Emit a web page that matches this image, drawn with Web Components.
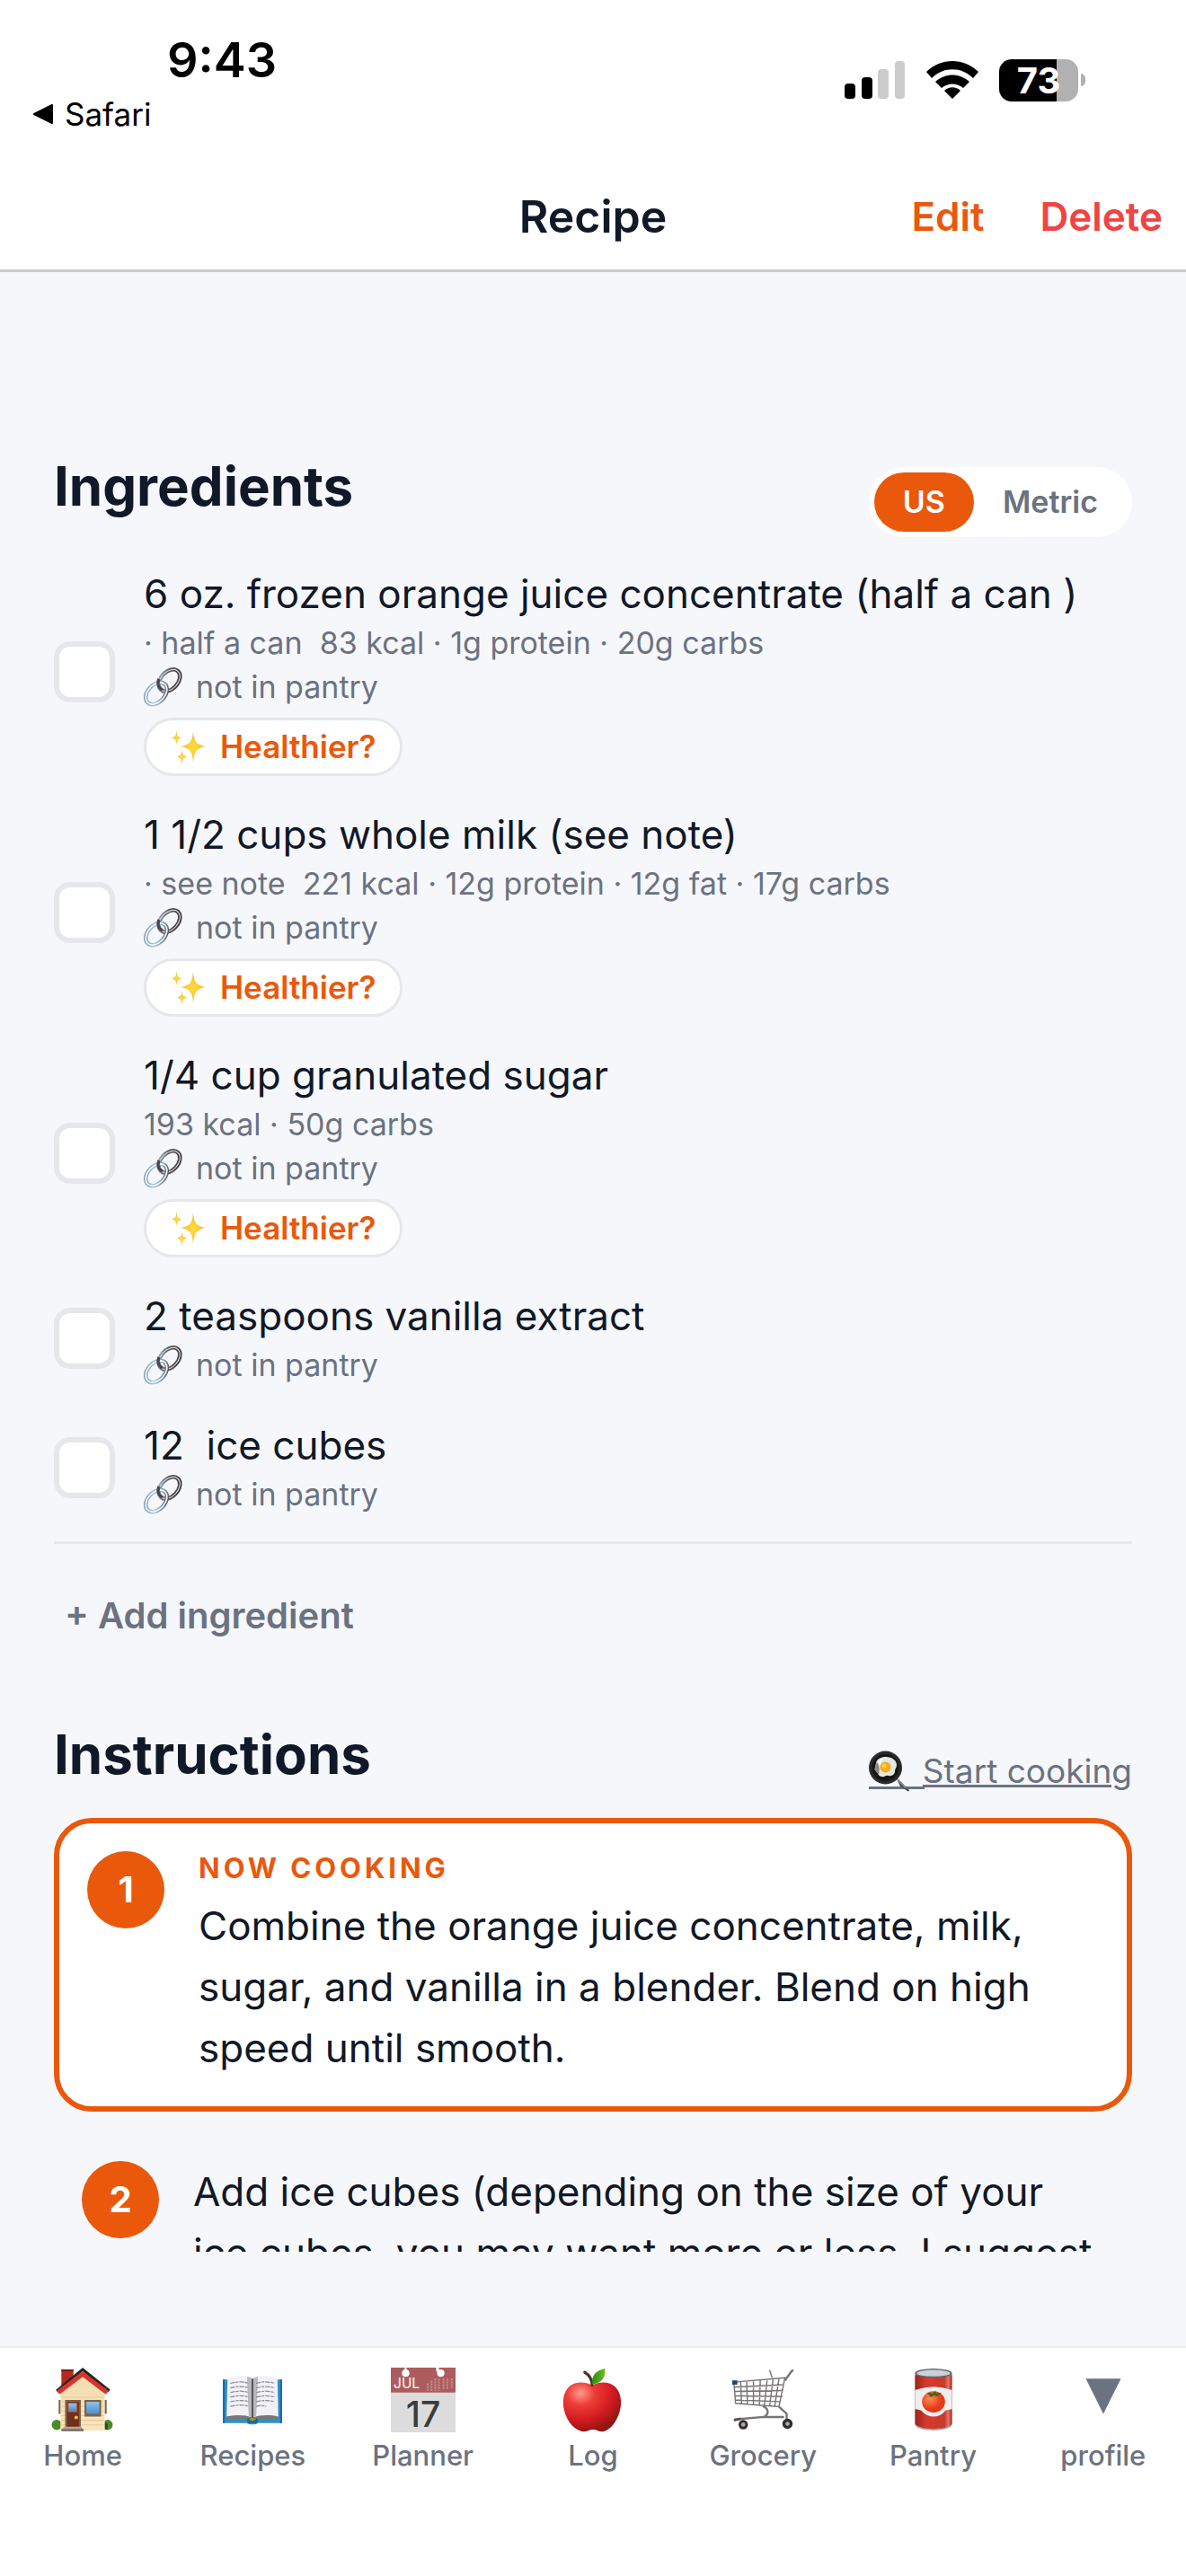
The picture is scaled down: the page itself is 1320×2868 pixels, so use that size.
<!DOCTYPE html>
<html lang="en">
<head>
<meta charset="utf-8">
<meta name="viewport" content="width=device-width, initial-scale=1">
<title>Recipe</title>
<style>
html, body {
  margin: 0;
  height: 100%;
}

body {
  --ink: #111827;
  --muted: #6b7280;
  --accent: #ea580c;
  --danger: #ef4444;
  --line: #e5e7eb;
  --page: #f6f7fb;
  font-family: Inter, "Liberation Sans", sans-serif;
  color: var(--ink);
  background: var(--page);
}
</style>
</head>
<body>

<recipe-app>
  <status-bar slot="top"></status-bar>
  <nav-header slot="top">Recipe</nav-header>

  <recipe-section>
    <span slot="title">Ingredients</span>
    <unit-toggle slot="action"></unit-toggle>
    <ingredient-row healthier>6 oz. frozen orange juice concentrate (half a can )<span slot="meta">· half a can&nbsp; 83 kcal · 1g protein · 20g carbs</span></ingredient-row>
    <ingredient-row healthier>1 1/2 cups whole milk (see note)<span slot="meta">· see note&nbsp; 221 kcal · 12g protein · 12g fat · 17g carbs</span></ingredient-row>
    <ingredient-row healthier>1/4 cup granulated sugar<span slot="meta">193 kcal · 50g carbs</span></ingredient-row>
    <ingredient-row>2 teaspoons vanilla extract</ingredient-row>
    <ingredient-row>12&nbsp; ice cubes</ingredient-row>
    <add-ingredient>+ Add ingredient</add-ingredient>
  </recipe-section>

  <recipe-section class="steps">
    <span slot="title">Instructions</span>
    <cooking-link slot="action">Start cooking</cooking-link>
    <step-card number="1" active>Combine the orange juice concentrate, milk, sugar, and vanilla in a blender. Blend on high speed until smooth.</step-card>
    <step-card number="2">Add ice cubes (depending on the size of your ice cubes, you may want more or less. I suggest</step-card>
  </recipe-section>

  <tab-bar slot="bottom">
    <tab-item icon="home">Home</tab-item>
    <tab-item icon="book">Recipes</tab-item>
    <tab-item icon="calendar">Planner</tab-item>
    <tab-item icon="apple">Log</tab-item>
    <tab-item icon="cart">Grocery</tab-item>
    <tab-item icon="can">Pantry</tab-item>
    <tab-item icon="down">profile</tab-item>
  </tab-bar>
</recipe-app>

<script>
const icons = {
  link: `<svg viewBox="0 0 42 42">
    <defs><linearGradient id="steel" x1="0" y1="0" x2="1" y2="1"><stop offset="0" stop-color="#a9c6e2"/><stop offset=".45" stop-color="#5d5558"/><stop offset="1" stop-color="#3b3436"/></linearGradient>
    <linearGradient id="steel2" x1="0" y1="0" x2="1" y2="1"><stop offset="0" stop-color="#7d95ad"/><stop offset=".5" stop-color="#a9c9e2"/><stop offset="1" stop-color="#4a4648"/></linearGradient></defs>
    <g fill="none"><ellipse cx="28.500" cy="13.500" rx="14" ry="9.500" transform="rotate(-47 28.500 13.500)" stroke="url(#steel)" stroke-width="4.500"/>
    <ellipse cx="28.500" cy="13.500" rx="14" ry="9.500" transform="rotate(-47 28.500 13.500)" stroke="#dbe7f2" stroke-width="1"/>
    <ellipse cx="14" cy="28" rx="14" ry="9.500" transform="rotate(-47 14 28)" stroke="url(#steel2)" stroke-width="4.500"/>
    <ellipse cx="14" cy="28" rx="14" ry="9.500" transform="rotate(-47 14 28)" stroke="#f4f9fd" stroke-width="1.600"/>
    <path d="M17 12c-2 5-1 10 4 12" stroke="#4c4547" stroke-width="3.500"/></g></svg>`,

  sparkles: `<svg viewBox="0 0 38 38">
    <defs><radialGradient id="gold"><stop offset="0" stop-color="#ffdf3a"/><stop offset=".5" stop-color="#fdc935"/><stop offset="1" stop-color="#f6b04a"/></radialGradient></defs>
    <g fill="url(#gold)"><path d="M24 1c1 11 3 15 14 17-11 2-13 6-14 18-1-12-3-16-14-18 11-2 13-6 14-17z"/>
    <path d="M5.500 0c.6 6 1.500 7.500 5.500 8.500-4 1-5 2.500-5.500 8-.6-5.500-1.500-7-5.500-8 4-1 5-2.500 5.500-8.500z"/>
    <path d="M11.500 22c.6 5 1.500 6.500 5.500 7.500-4 1-5 3-5.500 8.500-.6-5.500-1.500-7.500-5.500-8.500 4-1 5-2.500 5.500-7.500z"/></g></svg>`,

  pan: `<svg viewBox="0 0 46 46">
    <path d="M31 31l4 3 10 10c0 1-1 2-2 1L35 40z" fill="#4b4b4d"/><path d="M32 32l9 10" stroke="#8a8a8c" stroke-width="1.500"/>
    <circle cx="18.500" cy="19" r="18.500" fill="#2a2a2a"/><circle cx="18.500" cy="19" r="15" fill="#161616"/>
    <path d="M8 14c1-5 6-7 11-7 7 0 12 4 12 9 0 3-2 4-2 7s-3 6-7 5-4 2-8 1-3-4-6-6c-1-2-1-6 0-9z" fill="#e5e8df"/>
    <path d="M9 13c3 3 3 9 2 14l-5-6z" fill="#8f858c"/>
    <path d="M15 9c-3 2-3 5-2 7" stroke="#fff" stroke-width="2" fill="none"/>
    <circle cx="18.500" cy="18.500" r="6" fill="#f9a91b"/><circle cx="17" cy="17" r="2.500" fill="#ffd054"/></svg>`,

  home: `<svg viewBox="0 0 70 70">
    <defs><linearGradient id="wall" x1="0" y1="0" x2="0" y2="1"><stop offset="0" stop-color="#f3dcae"/><stop offset="1" stop-color="#f8e6bf"/></linearGradient>
    <linearGradient id="glass" x1="0" y1="0" x2="0" y2="1"><stop offset="0" stop-color="#8cc4f0"/><stop offset="1" stop-color="#4d8ed0"/></linearGradient></defs>
    <path d="M12 2h13v14L12 28z" fill="#b3281f"/><path d="M12 2h13v2H12z" fill="#7b1e1b"/>
    <circle cx="7" cy="62" r="5.500" fill="#4c8a27"/><circle cx="62" cy="62" r="5.500" fill="#4c8a27"/><path d="M57 60h5v7h-5z" fill="#274d1d"/>
    <path d="M11 27L35 7l24 20v41H11z" fill="url(#wall)"/>
    <path d="M12 32h46M12 37h46M12 42h46M12 47h46M12 52h46M12 57h46M12 62h46" stroke="#e6cb99" stroke-width="1"/>
    <path d="M9 35h2v15H9zM59 35h2v15h-2z" fill="#7b6954"/>
    <path d="M6 24L35 0l30 24-3 3L35 4 8 27z" fill="#252525"/>
    <path d="M7 25L35 4l28 21-3 4L35 10 10 29z" fill="#d9342b"/>
    <path d="M16 35h17v29H16z" fill="#806043"/><path d="M18 37h13v27H18z" fill="#71301c"/><path d="M19 38h10v10H19z" fill="#bd6d4f"/><path d="M20 39h8v8h-8z" fill="url(#glass)"/><circle cx="28" cy="54" r="2" fill="#f2bd4a"/>
    <path d="M37 35h18v18H37z" fill="#806043"/><path d="M39 37h14v13H39z" fill="url(#glass)"/>
    <path d="M14 64h20v2H14z" fill="#b5aa9d"/><path d="M12 66h24v3H12z" fill="#81786f"/></svg>`,

  book: `<svg viewBox="0 0 70 70">
    <path d="M3 13h64v47H41c-2 2-10 2-12 0H3z" fill="#2f8fc8"/><path d="M3 13h2v47H3zM65 13h2v47h-2z" fill="#1c6ba3"/>
    <path d="M9 50l-2 6h25l3 2 3-2h25l-2-6z" fill="#777"/>
    <path d="M8 12c8-3 19-5 26-1v43c-7-3-18-3-27-1z" fill="#f1f1f6"/><path d="M62 12c-8-3-19-5-26-1v43c7-3 18-3 27-1z" fill="#f1f1f6"/>
    <path d="M29 10c3 0 5 1 6 3 1-2 3-3 6-3l-2 44h-8z" fill="#b9b9c0"/><path d="M34 12h2v43h-2z" fill="#555"/>
    <path d="M11 17c8-2 14-2 20 0M11 22c8-2 14-2 20 0M11 27c8-2 14-2 20 0M11 32c8-2 14-2 20 0M11 37c8-2 14-2 20 0M11 42c8-2 14-2 20 0M39 17c7-2 13-2 20 0M39 22c7-2 13-2 20 0M39 27c7-2 13-2 20 0M39 32c7-2 13-2 20 0M39 37c7-2 13-2 20 0M39 42c4-1 8-1 11 0" stroke="#8b8b93" stroke-width="1.200" stroke-dasharray="5 1 3 1" fill="none"/>
    <path d="M29 56c3-3 9-3 12 0l-1 4H30z" fill="#186a92"/><path d="M31 56c2-2 6-2 8 0l-4 2z" fill="#b78e20"/></svg>`,

  calendar: `<svg viewBox="0 0 70 70">
    <path d="M0 0h70v70H0z" fill="#dcdcdc"/><path d="M0 0h70v27H0z" fill="#ac5c5d"/>
    <path d="M15 0h2v4h-2zM49 0h3v4h-3z" fill="#fff"/><circle cx="16" cy="6" r="4" fill="#fff"/><circle cx="54" cy="6" r="4" fill="#fff"/>
    <path d="M40 17v8M44 14v11M48 12v13M52 12v13M57 12v11M61 12v11M66 12v10" stroke="#c98f90" stroke-width="2" stroke-dasharray="2 1"/>
    <text x="3" y="22" font-family="Inter, sans-serif" font-size="15" fill="#f5e4e4">JUL</text>
    <text x="35" y="64" text-anchor="middle" font-family="Inter, sans-serif" font-size="38" font-weight="500" fill="#3c3c3c">17</text></svg>`,

  apple: `<svg viewBox="0 0 70 70">
    <defs><radialGradient id="skin" cx=".3" cy=".22" r=".8"><stop offset="0" stop-color="#ff9b8c"/><stop offset=".3" stop-color="#ee3d38"/><stop offset=".7" stop-color="#d11a20"/><stop offset="1" stop-color="#8e1712"/></radialGradient>
    <linearGradient id="leaf"><stop offset="0" stop-color="#2d8a15"/><stop offset="1" stop-color="#6cbf1e"/></linearGradient></defs>
    <path d="M34 19c8-4 18-4 24 1 6 5 8 13 7 22-2 13-9 24-18 27-5 1-7-2-12-2s-7 3-12 2C12 66 5 55 3 42c-1-9 1-17 7-22 6-5 16-5 24-1z" fill="url(#skin)"/>
    <path d="M26 5c5 3 8 8 8 14" stroke="#54301d" stroke-width="3" stroke-linecap="round" fill="none"/>
    <path d="M34 18c-1-9 4-15 14-17 1 9-3 16-14 17z" fill="url(#leaf)"/></svg>`,

  cart: `<svg viewBox="0 0 76 70">
    <g fill="none" stroke="#777376" stroke-width="1.500"><path d="M4 14l60-5-7 34-51-4zM4 20l59-3M5 25l57-1M5 30l56 1M6 35l52 2M12 14l1 25M19 13l1 27M27 13v27M35 12l-1 29M43 12l-3 29M50 11l-4 31M57 10l-5 32"/>
    <path d="M64 12L72 1l2-1M57 43l9 8v9M38 42c8 4 7 10 1 13L5 58M39 55h24" stroke-width="2.500"/><path d="M46 0l3 9"/></g>
    <path d="M2 12h6v5H2z" fill="#224765"/><path d="M4 59l8-2" stroke="#555" stroke-width="3"/>
    <circle cx="15" cy="64" r="5.500" fill="#302b2c"/><circle cx="15" cy="64" r="2.500" fill="#aaa"/>
    <circle cx="67" cy="63" r="6" fill="#302b2c"/><circle cx="67" cy="63" r="2.500" fill="#aaa"/></svg>`,

  can: `<svg viewBox="0 0 70 70">
    <defs><linearGradient id="tin"><stop offset="0" stop-color="#98251c"/><stop offset=".3" stop-color="#d5392d"/><stop offset=".8" stop-color="#c93b2d"/><stop offset=".9" stop-color="#df7769"/><stop offset="1" stop-color="#a42a20"/></linearGradient>
    <radialGradient id="tomato" cx=".35" cy=".35"><stop offset="0" stop-color="#ff8b54"/><stop offset="1" stop-color="#e6391a"/></radialGradient></defs>
    <path d="M15 6h40v56c-3 8-37 8-40 0z" fill="#a7a9ab"/><path d="M15 8h40v53c-5 7-35 7-40 0z" fill="url(#tin)"/>
    <path d="M15 24c5 0 8-3 20-3s15 3 20 3v21c-6 0-9 4-20 4s-14-4-20-4z" fill="#edf0ed"/><circle cx="35" cy="37" r="16" fill="#edf0ed"/>
    <ellipse cx="35" cy="6" rx="20" ry="5" fill="#66696d"/><ellipse cx="35" cy="6" rx="18" ry="3.500" fill="#c9d2db"/>
    <ellipse cx="35" cy="37" rx="12.500" ry="11.500" fill="url(#tomato)"/><path d="M28 27l6 1 3-3 1 3 6-1-5 4-3-1-4 2z" fill="#386a22"/></svg>`,

  down: `<svg viewBox="0 0 70 70"><path d="M16 12h38L35 50z" fill="#6b7280"/></svg>`
};

class BaseElement extends HTMLElement {
  connectedCallback() {
    if (this.shadowRoot) return;
    const template = document.createElement("template");
    template.innerHTML = `<style>
      * { box-sizing: border-box; }
      svg { display: block; width: 100%; height: 100%; overflow: visible; }
      button { font: inherit; color: inherit; background: none; border: 0; padding: 0; margin: 0; }
      a { color: inherit; text-decoration: none; }
    </style>` + this.render();
    this.attachShadow({ mode: "open" }).appendChild(template.content.cloneNode(true));
  }
}

class RecipeApp extends BaseElement {
  render() {
    return `
<style>
:host {
  display: flex;
  flex-direction: column;
  height: 100vh;
}
header {
  background: white;
  border-bottom: 3px solid #c9cbd0;
}
main {
  flex: 1;
  min-height: 0;
  overflow: hidden;
  padding: 207px 60px 0;
  margin-bottom: 105px;
}
</style>
<header><slot name="top"></slot></header>
<main><slot></slot></main>
<slot name="bottom"></slot>`;
  }
}

class StatusBar extends BaseElement {
  render() {
    return `
<style>
:host {
  display: flex;
  justify-content: space-between;
  align-items: flex-start;
  padding: 34px 112px 0 36px;
  color: black;
}
.time {
  font-size: 54px;
  line-height: 66px;
  font-weight: 600;
  padding-left: 150px;
}
.back {
  display: flex;
  align-items: center;
  gap: 12px;
  font-size: 35px;
  line-height: 54px;
}
.back svg { width: 24px; height: 22px; }
.icons {
  display: flex;
  align-items: center;
  gap: 22px;
  height: 48px;
  margin-top: 31px;
}
.signal { width: 68px; height: 44px; }
.wifi { width: 60px; height: 44px; }
.battery {
  display: flex;
  align-items: center;
  gap: 3px;
}
.level {
  width: 88px;
  border-radius: 14px;
  background: linear-gradient(to right, black 73%, #b1b1b1 73%);
  color: white;
  text-align: center;
  font-size: 40px;
  line-height: 47px;
  font-weight: 700;
}
.cap {
  width: 5px;
  height: 14px;
  border-radius: 0 6px 6px 0;
  background: #b1b1b1;
}
</style>
<div>
  <div class="time">9:43</div>
  <a class="back" href="#safari"><svg viewBox="0 0 24 22"><path d="M2 11L22 1v20z" stroke="black" stroke-width="2" stroke-linejoin="round"/></svg>Safari</a>
</div>
<div class="icons">
  <svg class="signal" viewBox="0 0 68 44"><rect y="26" width="12" height="17" rx="4"/><rect x="19" y="19" width="12" height="24" rx="4"/><g fill="#cbcbcb"><rect x="37" y="10" width="12" height="33" rx="4"/><rect x="56" y="1" width="11" height="42" rx="4"/></g></svg>
  <svg class="wifi" viewBox="0 0 60 44"><path d="M1 13C17-3 43-3 59 13l-6 7C40 7 20 7 7 20zM11 24c11-10 27-10 38 0l-7 7c-7-6-17-6-24 0zM21 34c5-5 13-5 18 0l-9 9z"/></svg>
  <div class="battery"><div class="level">73</div><div class="cap"></div></div>
</div>`;
  }
}

class NavHeader extends BaseElement {
  render() {
    return `
<style>
:host {
  display: grid;
  grid-template-columns: 1fr auto 1fr;
  align-items: center;
  padding: 56px 26px 28px;
}
h1 {
  grid-column: 2;
  margin: 0;
  font-size: 50px;
  line-height: 62px;
  font-weight: 600;
}
.actions {
  display: flex;
  justify-content: flex-end;
  gap: 62px;
  font-size: 44px;
  line-height: 62px;
  font-weight: 600;
}
.edit { color: var(--accent); }
.delete { color: var(--danger); }
</style>
<h1><slot></slot></h1>
<div class="actions"><button class="edit">Edit</button><button class="delete">Delete</button></div>`;
  }
}

class RecipeSection extends BaseElement {
  render() {
    return `
<style>
:host { display: block; }
.head {
  display: flex;
  justify-content: space-between;
  align-items: flex-end;
  padding-bottom: 34px;
}
:host(.steps) .head { padding-bottom: 28px; }
h2 {
  margin: 0;
  align-self: flex-start;
  font-size: 60px;
  line-height: 62px;
  font-weight: 700;
}
</style>
<div class="head"><h2><slot name="title"></slot></h2><slot name="action"></slot></div>
<slot></slot>`;
  }
}

class UnitToggle extends BaseElement {
  render() {
    return `
<style>
:host {
  display: flex;
  background: white;
  border-radius: 39px;
  padding: 6px;
  margin-top: 10px;
}
button {
  border-radius: 33px;
  padding: 0 32px;
  font-size: 34px;
  line-height: 66px;
  font-weight: 600;
  color: var(--muted);
}
button[aria-pressed="true"] {
  background: var(--accent);
  color: white;
}
</style>
<button aria-pressed="true">US</button>
<button aria-pressed="false">Metric</button>`;
  }

  connectedCallback() {
    super.connectedCallback();
    const buttons = this.shadowRoot.querySelectorAll("button");
    buttons.forEach((button) => {
      button.onclick = () => buttons.forEach((b) => b.setAttribute("aria-pressed", b === button));
    });
  }
}

class IngredientRow extends BaseElement {
  render() {
    return `
<style>
:host {
  display: flex;
  align-items: center;
  gap: 32px;
  margin-bottom: 36px;
}
input {
  appearance: none;
  flex: none;
  width: 68px;
  height: 68px;
  margin: 0;
  border: 6px solid var(--line);
  border-radius: 18px;
  background: white;
}
input:checked { background: var(--accent); }
.name {
  display: block;
  font-size: 44px;
  line-height: 59px;
}
.meta, .pantry {
  font-size: 34px;
  line-height: 49px;
  color: var(--muted);
}
.pantry {
  display: flex;
  align-items: center;
  gap: 16px;
}
.pantry svg { width: 42px; height: 42px; }
.healthier {
  display: flex;
  align-items: center;
  gap: 16px;
  margin-top: 10px;
  padding: 0 26px 0 28px;
  border: 3px solid var(--line);
  border-radius: 33px;
  background: white;
  color: var(--accent);
  font-size: 35px;
  line-height: 59px;
  font-weight: 600;
}
.healthier svg { width: 38px; height: 38px; }
</style>
<input type="checkbox" id="done">
<div>
  <label class="name" for="done"><slot></slot></label>
  ${this.querySelector('[slot="meta"]') ? '<div class="meta"><slot name="meta"></slot></div>' : ""}
  <button class="pantry">${icons.link}not in pantry</button>
  ${this.hasAttribute("healthier") ? `<button class="healthier">${icons.sparkles}Healthier?</button>` : ""}
</div>`;
  }
}

class AddIngredient extends BaseElement {
  render() {
    return `
<style>
:host {
  display: block;
  margin-top: -8px;
  padding: 53px 12px 96px;
  border-top: 3px solid var(--line);
}
button {
  font-size: 40px;
  line-height: 54px;
  font-weight: 600;
  color: var(--muted);
}
</style>
<button><slot></slot></button>`;
  }
}

class CookingLink extends BaseElement {
  render() {
    return `
<style>
:host {
  display: block;
  margin-top: 26px;
  font-size: 37px;
  line-height: 48px;
  color: var(--muted);
}
a {
  display: flex;
  align-items: center;
  gap: 14px;
  background: linear-gradient(var(--muted), var(--muted)) 0 100% / 62px 3px no-repeat;
  background-position-y: 41px;
}
span {
  text-decoration: underline;
  text-decoration-thickness: 3px;
}
svg { width: 46px; height: 46px; }
</style>
<a href="#cook">${icons.pan}<span><slot></slot></span></a>`;
  }
}

class StepCard extends BaseElement {
  render() {
    return `
<style>
:host {
  display: flex;
  gap: 38px;
  padding: 31px;
}
:host([active]) {
  border: 6px solid var(--accent);
  border-radius: 42px;
  background: white;
  margin-bottom: 24px;
}
.number {
  flex: none;
  width: 86px;
  height: 86px;
  border-radius: 50%;
  background: var(--accent);
  color: white;
  text-align: center;
  font-size: 40px;
  line-height: 86px;
  font-weight: 700;
}
.now {
  margin-bottom: 12px;
  font-size: 31px;
  line-height: 37px;
  font-weight: 700;
  letter-spacing: 4px;
  color: var(--accent);
}
p {
  margin: 0;
  font-size: 44px;
  line-height: 68px;
}
</style>
<div class="number">${this.getAttribute("number")}</div>
<div>
  ${this.hasAttribute("active") ? '<div class="now">NOW COOKING</div>' : ""}
  <p><slot></slot></p>
</div>`;
  }
}

class TabBar extends BaseElement {
  render() {
    return `
<style>
:host { display: block; }
nav {
  display: flex;
  gap: 5px;
  padding: 22px 0 112px;
  background: white;
  border-top: 2px solid #ebecf1;
}
</style>
<nav><slot></slot></nav>`;
  }
}

class TabItem extends BaseElement {
  render() {
    return `
<style>
:host {
  display: block;
  flex: 1 1 0;
}
a {
  display: flex;
  flex-direction: column;
  align-items: center;
  gap: 4px;
  font-size: 31px;
  line-height: 44px;
  font-weight: 500;
  color: var(--muted);
}
svg { width: 72px; height: 72px; }
</style>
<a href="#${this.getAttribute("icon")}">${icons[this.getAttribute("icon")]}<slot></slot></a>`;
  }
}

customElements.define("recipe-app", RecipeApp);
customElements.define("status-bar", StatusBar);
customElements.define("nav-header", NavHeader);
customElements.define("recipe-section", RecipeSection);
customElements.define("unit-toggle", UnitToggle);
customElements.define("ingredient-row", IngredientRow);
customElements.define("add-ingredient", AddIngredient);
customElements.define("cooking-link", CookingLink);
customElements.define("step-card", StepCard);
customElements.define("tab-bar", TabBar);
customElements.define("tab-item", TabItem);
</script>
</body>
</html>
